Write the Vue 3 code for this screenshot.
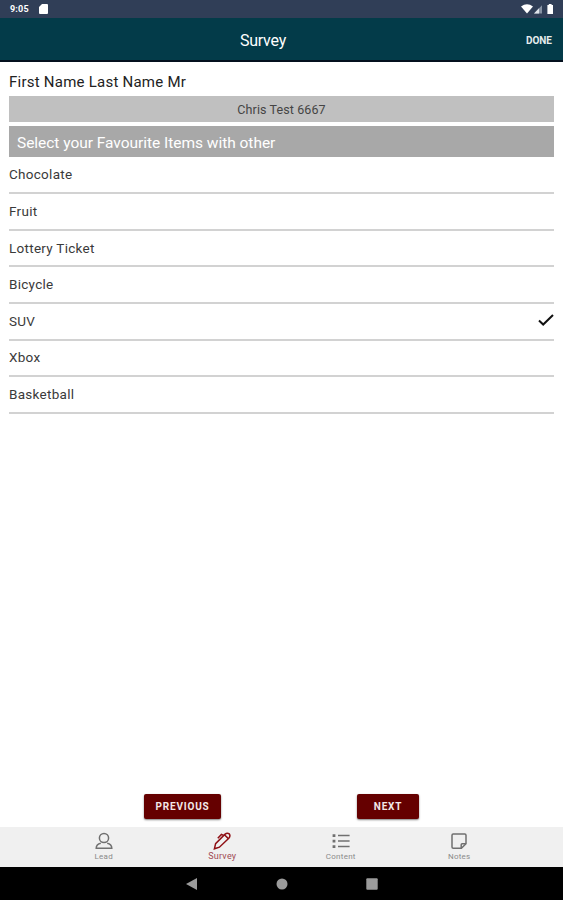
<template>
  <div class="screen">
    <!-- Status bar -->
    <div class="status-bar">
      <span class="clock">9:05</span>
      <svg class="sd-icon" viewBox="0 0 9 10">
        <path d="M3 0H8Q9 0 9 1V9Q9 10 8 10H1Q0 10 0 9V3Z" fill="#fff" />
      </svg>
      <svg class="signal-icons" viewBox="0 0 33 10">
        <path d="M0 2.4Q6 -2 12 2.4L6 9.6Z" fill="#fff" />
        <path d="M13 9.4L21 1.2V9.4Z" fill="#8792a3" />
        <path d="M13 9.4L18 4.2V9.4Z" fill="#dfe4ea" />
        <path d="M26.4 1H27.8V0H30.6V1H32V10H26.4Z" fill="#fff" />
      </svg>
    </div>

    <!-- Header -->
    <header class="header">
      <h1 class="header-title">Survey</h1>
      <button class="done-btn">DONE</button>
    </header>

    <!-- Survey question -->
    <main class="content">
      <div class="field-label">First Name Last Name Mr</div>
      <div class="field-value">Chris Test 6667</div>
      <div class="question">Select your Favourite Items with other</div>
      <ul class="options">
        <li
          v-for="item in options"
          :key="item"
          class="option"
          @click="selected = item"
        >
          <span>{{ item }}</span>
          <svg v-if="selected === item" class="check" viewBox="0 0 16 12">
            <path d="M1 6.5L5.2 10.5L15 1" fill="none" stroke="#111" stroke-width="2" />
          </svg>
        </li>
      </ul>
    </main>

    <div class="actions">
      <button class="btn btn-previous">PREVIOUS</button>
      <button class="btn btn-next">NEXT</button>
    </div>

    <!-- Tab bar -->
    <nav class="tab-bar">
      <div
        v-for="tab in tabs"
        :key="tab"
        :class="['tab', { active: activeTab === tab }]"
        @click="activeTab = tab"
      >
        <svg class="tab-icon" viewBox="0 0 20 18">
          <template v-if="tab === 'Lead'">
            <circle cx="10" cy="6" r="4.6" />
            <path d="M6.8 11.2C4 11.8 2.2 13.2 2.2 16.2H17.8C17.8 13.2 16 11.8 13.2 11.2" />
          </template>
          <template v-else-if="tab === 'Survey'">
            <path d="M2.4 16.8L3.6 11.6L12.8 2.4Q15.2 .4 17.2 1.8Q18.8 3.8 16.8 6.2L7.4 15.2Z" />
            <path d="M12.4 2.8L16.4 6.6M11.6 3.4L9.4 2.4L5.8 6.2" />
          </template>
          <template v-else-if="tab === 'Content'">
            <path d="M1.6 3.6H4.4M1.6 9.1H4.4M1.6 14.6H4.4" stroke-width="2.6" />
            <path d="M7 3.6H18.6M7 9.1H18.6M7 14.6H18.6" />
          </template>
          <template v-else>
            <path d="M4.2 2H15.8Q17 2 17 3.2V11.7L12.4 16.3H4.2Q3 16.3 3 15.1V3.2Q3 2 4.2 2Z" />
            <path d="M12.2 16.3V12.7Q12.2 11.7 13.2 11.7H17" />
          </template>
        </svg>
        <span class="tab-label">{{ tab }}</span>
      </div>
    </nav>

    <!-- Android navigation -->
    <div class="system-nav">
      <svg viewBox="0 0 12 12"><path d="M0 6L11 0V12Z" /></svg>
      <svg viewBox="0 0 12 12"><circle cx="6" cy="6" r="5.5" /></svg>
      <svg viewBox="0 0 12 12"><rect x=".3" y=".3" width="11.4" height="11.4" rx="1" /></svg>
    </div>
  </div>
</template>

<script setup>
import { ref } from 'vue'

const options = ['Chocolate', 'Fruit', 'Lottery Ticket', 'Bicycle', 'SUV', 'Xbox', 'Basketball']
const selected = ref('SUV')

const tabs = ['Lead', 'Survey', 'Content', 'Notes']
const activeTab = ref('Survey')
</script>

<style scoped>
.screen {
  display: flex;
  flex-direction: column;
  height: 100vh;
  background: #fff;
  color: #3a3a3a;
  font-family: Roboto, "Liberation Sans", sans-serif;
}

/* Status bar */
.status-bar {
  display: flex;
  align-items: center;
  height: 18px;
  padding: 0 9px 0 10px;
  background: #303e57;
}

.clock {
  width: 29px;
  color: #fff;
  font-size: 9px;
  font-weight: 700;
  letter-spacing: 0.2px;
}

.sd-icon {
  width: 9px;
  height: 10px;
}

.signal-icons {
  width: 33px;
  height: 10px;
  margin-left: auto;
}

/* Header */
.header {
  display: flex;
  align-items: center;
  box-sizing: border-box;
  height: 44px;
  padding: 3px 11px 0 0;
  border-bottom: 2px solid #04101e;
  background: #033b49;
  color: #fff;
}

.header-title {
  flex: 1;
  margin: 0;
  font-size: 16px;
  font-weight: 400;
  letter-spacing: -0.25px;
  text-align: center;
}

.done-btn {
  padding: 0;
  border: 0;
  background: none;
  color: #e6ecee;
  font-family: inherit;
  font-size: 10px;
  font-weight: 700;
}

/* Survey question */
.content {
  flex: 1;
  padding: 10px 9px 0;
}

.field-label {
  height: 23.5px;
  line-height: 21px;
  color: #222;
  font-size: 15px;
  letter-spacing: 0.24px;
}

.field-value {
  height: 26px;
  line-height: 27px;
  background: #c0c0c0;
  color: #444;
  font-size: 12.5px;
  letter-spacing: 0.1px;
  text-align: center;
}

.question {
  height: 31.5px;
  margin-top: 4px;
  padding-left: 8px;
  background: #a8a8a8;
  color: #fff;
  font-size: 15.5px;
  line-height: 34px;
  letter-spacing: -0.03px;
}

.options {
  margin: 0;
  padding: 0.6px 0 0;
  list-style: none;
}

.option {
  display: flex;
  align-items: center;
  justify-content: space-between;
  box-sizing: border-box;
  height: 36.6px;
  padding-bottom: 1px;
  border-bottom: 2px solid #d2d2d2;
  font-size: 13.5px;
  letter-spacing: 0.28px;
}

.check {
  width: 16px;
  height: 12px;
  margin-top: -1px;
}

/* Previous / next */
.actions {
  display: flex;
  justify-content: center;
  gap: 136px;
  height: 33px;
}

.btn {
  height: 25px;
  padding: 0;
  border: 0;
  border-radius: 2px;
  background: #650000;
  box-shadow: 0 1px 2px rgba(0, 0, 0, 0.5);
  color: #f3e8e8;
  font-family: inherit;
  font-size: 10px;
  font-weight: 700;
  letter-spacing: 0.8px;
}

.btn-previous {
  width: 77px;
}

.btn-next {
  width: 62px;
}

/* Tab bar */
.tab-bar {
  display: grid;
  grid-template-columns: repeat(4, 1fr);
  height: 40px;
  padding: 0 44.5px;
  background: #f0f0f0;
}

.tab {
  display: flex;
  flex-direction: column;
  align-items: center;
  padding-top: 5px;
  color: #707070;
}

.tab.active {
  color: #8f1015;
}

.tab-icon {
  width: 20px;
  height: 18px;
  fill: none;
  stroke: currentColor;
  stroke-width: 1.5;
}

.tab-label {
  margin-top: 1px;
  color: #8a8a8a;
  font-size: 8px;
  line-height: 11px;
  letter-spacing: 0.25px;
}

.tab.active .tab-label {
  color: #a04a52;
  font-size: 9px;
}

/* Android navigation */
.system-nav {
  display: flex;
  align-items: center;
  justify-content: center;
  gap: 78px;
  height: 33px;
  background: #000;
}

.system-nav svg {
  width: 12px;
  height: 12px;
  fill: #9b9b9b;
}
</style>
